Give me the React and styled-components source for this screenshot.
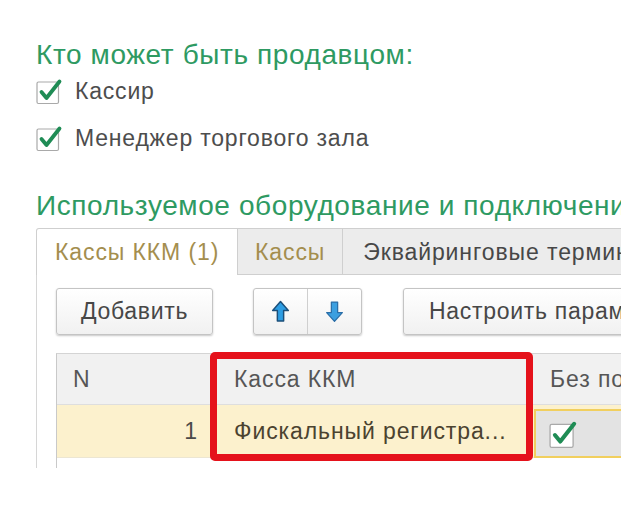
import styled, { createGlobalStyle } from 'styled-components';

const GlobalStyle = createGlobalStyle`
    html, body {
        margin: 0;
        padding: 0;
        background: #ffffff;
    }
    body {
        font-family: "Liberation Sans", Arial, sans-serif;
        color: #4a4a4a;
    }
`

const CheckMark = ({ size = 28 }) => (
    <svg width={size} height={size} viewBox="0 0 28 28">
        <rect x="1" y="5" width="21.5" height="21.5" rx="1.5" fill="#fff" stroke="#a9a9a9" strokeWidth="1.2" />
        <path d="M5.5 15 L10.5 21 L23.5 4.5" fill="none" stroke="#1f8c55" strokeWidth="3.8" strokeLinecap="round" strokeLinejoin="round" />
    </svg>
);

const ArrowUp = () => (
    <svg width="19" height="23" viewBox="0 0 18 22">
        <path d="M9 1.5 L16.5 10 L12 10 L12 20 L6 20 L6 10 L1.5 10 Z" fill="#2d9de3" stroke="#1b4f7a" strokeWidth="1.4" strokeLinejoin="round" />
    </svg>
);

const ArrowDown = () => (
    <svg width="19" height="23" viewBox="0 0 18 22">
        <path d="M9 20.5 L16.5 12 L12 12 L12 2 L6 2 L6 12 L1.5 12 Z" fill="#3b9fe0" stroke="#2a6ea8" strokeWidth="1.2" strokeLinejoin="round" />
    </svg>
);

const App = () => {
    return (
        <Page>
            <GlobalStyle />
            <GroupTitle>Кто может быть продавцом:</GroupTitle>
            <CheckRow first>
                <CheckMark />
                <span>Кассир</span>
            </CheckRow>
            <CheckRow>
                <CheckMark />
                <span>Менеджер торгового зала</span>
            </CheckRow>

            <GroupTitle second>Используемое оборудование и подключения</GroupTitle>

            <Tabs>
                <Tab active>Кассы ККМ (1)</Tab>
                <Tab gold>Кассы</Tab>
                <Tab>Эквайринговые терминалы</Tab>
            </Tabs>

            <Panel>
                <Toolbar>
                    <Button width={157}>Добавить</Button>
                    <ButtonGroup>
                        <GroupButton><ArrowUp /></GroupButton>
                        <GroupButton><ArrowDown /></GroupButton>
                    </ButtonGroup>
                    <Button wide>Настроить параметры</Button>
                </Toolbar>

                <TableWrap>
                    <HeaderRow>
                        <Cell num>N</Cell>
                        <Cell>Касса ККМ</Cell>
                        <Cell last>Без подключения</Cell>
                    </HeaderRow>
                    <DataRow>
                        <Cell num align="right">1</Cell>
                        <Cell dark>Фискальный регистра...</Cell>
                        <ActiveCell>
                            <CheckMark size={30} />
                        </ActiveCell>
                    </DataRow>
                    <EmptyArea />
                    <Highlight />
                </TableWrap>
            </Panel>
        </Page>
    );
}

const Page = styled.div`
    width: 621px;
    height: 510px;
    overflow: hidden;
    box-sizing: border-box;
    padding: 40px 0 0 36px;
`

const GroupTitle = styled.h2`
    margin: ${props => props.second ? '39px 0 0' : '0'};
    font-size: 28px;
    line-height: 30px;
    letter-spacing: 0.6px;
    font-weight: 400;
    color: #2e9a62;
    white-space: nowrap;
`

const CheckRow = styled.div`
    display: flex;
    align-items: center;
    gap: 11px;
    height: 28px;
    margin-top: ${props => props.first ? '7px' : '19px'};
    font-size: 23px;
    letter-spacing: 0.8px;
    color: #4d4d4d;
    white-space: nowrap;
`

const Tabs = styled.div`
    display: flex;
    margin-top: 7px;
    height: 47px;
    white-space: nowrap;
`

const Tab = styled.div`
    display: flex;
    align-items: center;
    box-sizing: border-box;
    flex-shrink: 0;
    padding: ${props => props.active ? '0 0 0 18px' : props.gold ? '2px 17px 0' : '2px 20px 0'};
    font-size: 23px;
    letter-spacing: 0.9px;
    border: 1px solid #cfcfcf;
    border-left: ${props => props.active ? '1px solid #cfcfcf' : 'none'};
    border-bottom: ${props => props.active ? 'none' : '1px solid #cfcfcf'};
    border-radius: ${props => props.active ? '3px 0 0 0' : '0'};
    background: ${props => props.active ? '#ffffff' : '#ececec'};
    color: ${props => props.active || props.gold ? '#a48e4e' : '#474747'};
    width: ${props => props.active ? '202px' : 'auto'};
`

const Panel = styled.div`
    border-left: 1px solid #d6d6d6;
    height: 193px;
    padding: 13px 0 0 19px;
    box-sizing: border-box;
`

const Toolbar = styled.div`
    display: flex;
    align-items: center;
    height: 47px;
    white-space: nowrap;
`

const buttonFace = `
    box-sizing: border-box;
    height: 47px;
    border: 1px solid #c4c4c4;
    background: linear-gradient(#ffffff, #f1f1f1);
    box-shadow: 0 1px 2px rgba(0, 0, 0, 0.22);
    color: #474747;
    font-size: 23px;
    letter-spacing: 0.7px;
`

const Button = styled.div`
    ${buttonFace}
    display: flex;
    align-items: center;
    justify-content: ${props => props.wide ? 'flex-start' : 'center'};
    border-radius: 3px;
    flex-shrink: 0;
    width: ${props => props.width ? `${props.width}px` : 'auto'};
    padding: ${props => props.wide ? '0 25px' : '0'};
    margin-left: ${props => props.wide ? '41px' : '0'};
`

const ButtonGroup = styled.div`
    ${buttonFace}
    display: flex;
    margin-left: 40px;
    border-radius: 3px;
    width: 109px;
    flex-shrink: 0;
`

const GroupButton = styled.div`
    flex: 1;
    display: flex;
    align-items: center;
    justify-content: center;
    & + & {
        border-left: 1px solid #cfcfcf;
    }
`

const TableWrap = styled.div`
    position: relative;
    margin-top: 18px;
    border-left: 1px solid #c9c9c9;
    border-top: 1px solid #d4d4d4;
`

const HeaderRow = styled.div`
    display: grid;
    grid-template-columns: 158px 316px 1fr;
    height: 50px;
    background: #f1f1f1;
    border-bottom: 1px solid #dedede;
    color: #565656;
`

const DataRow = styled.div`
    display: grid;
    grid-template-columns: 158px 316px 1fr;
    height: 52px;
    background: #fcf1cd;
    border-bottom: 1px solid #ece6d2;
`

const Cell = styled.div`
    display: flex;
    align-items: center;
    justify-content: ${props => props.align === 'right' ? 'flex-end' : 'flex-start'};
    padding: ${props => props.num ? '0 16px' : '0 19px'};
    font-size: 23px;
    letter-spacing: 0.9px;
    white-space: nowrap;
    overflow: hidden;
    color: ${props => props.dark ? '#4b4330' : 'inherit'};
    border-right: ${props => props.last ? 'none' : '1px solid #e2e2e2'};
`

const ActiveCell = styled.div`
    display: flex;
    align-items: center;
    margin: 4px 0 -1px 3px;
    padding-left: 13px;
    background: #e3e3e3;
    border: 2px solid #f1cf5e;
    border-right: none;
`

const EmptyArea = styled.div`
    height: 10px;
    background: #ffffff;
`

const Highlight = styled.div`
    position: absolute;
    left: 153px;
    top: -2px;
    width: 323px;
    height: 109px;
    box-sizing: border-box;
    border: 7px solid #e5121b;
    border-radius: 5px;
    pointer-events: none;
`

export default App;
